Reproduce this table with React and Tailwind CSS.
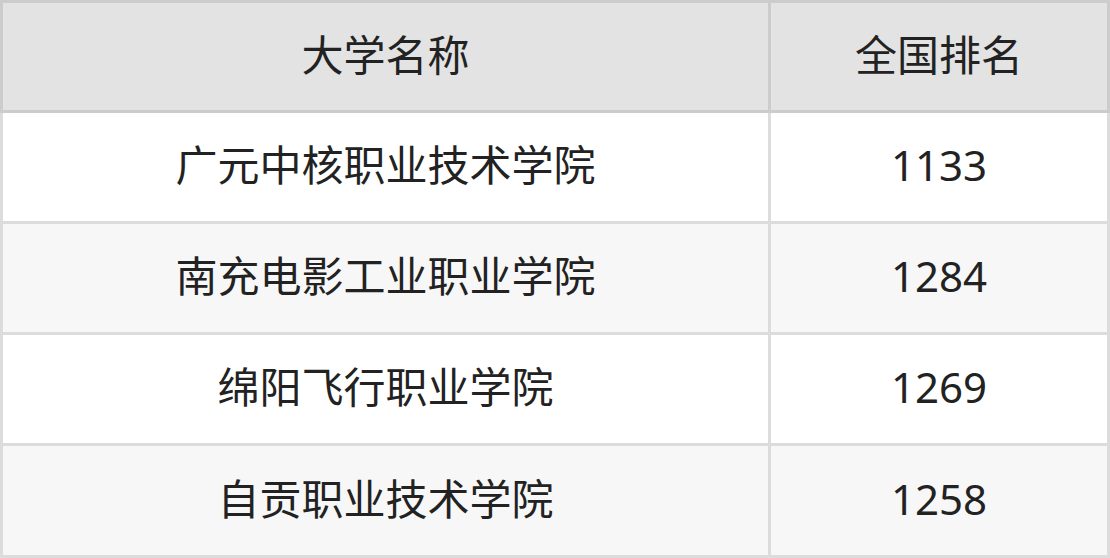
const rows = [
  { name: "广元中核职业技术学院", rank: "1133" },
  { name: "南充电影工业职业学院", rank: "1284" },
  { name: "绵阳飞行职业学院", rank: "1269" },
  { name: "自贡职业技术学院", rank: "1258" },
];

export default function App() {
  return (
    <div
      className="w-[1110px] h-[558px] bg-white text-[#222] text-[42px] leading-none"
      style={{ fontFamily: '"Noto Sans", "Noto Sans CJK SC", sans-serif' }}
    >
      {/* header */}
      <div className="grid grid-cols-[771px_339px] h-[113px] bg-[#e3e3e3] border-t-[3px] border-[#cccccc]">
        <div className="flex items-center justify-center pb-1 border-l-[3px] border-b-[3px] border-r-[3px] border-[#cccccc]">
          大学名称
        </div>
        <div className="flex items-center justify-center pb-1 border-b-[3px] border-r-[3px] border-[#cccccc]">
          全国排名
        </div>
      </div>
      {rows.map((row, i) => (
        <div
          key={i}
          className={`grid grid-cols-[771px_339px] ${
            i === rows.length - 1 ? "h-[112px]" : "h-[111px]"
          } ${i % 2 === 1 ? "bg-[#f7f7f7]" : "bg-white"}`}
        >
          <div className="flex items-center justify-center pb-1 border-l-[3px] border-b-[3px] border-r-[3px] border-[#dcdcdc]">
            {row.name}
          </div>
          <div className="flex items-center justify-center pb-1 border-b-[3px] border-r-[3px] border-[#dcdcdc]">
            {row.rank}
          </div>
        </div>
      ))}
    </div>
  );
}
